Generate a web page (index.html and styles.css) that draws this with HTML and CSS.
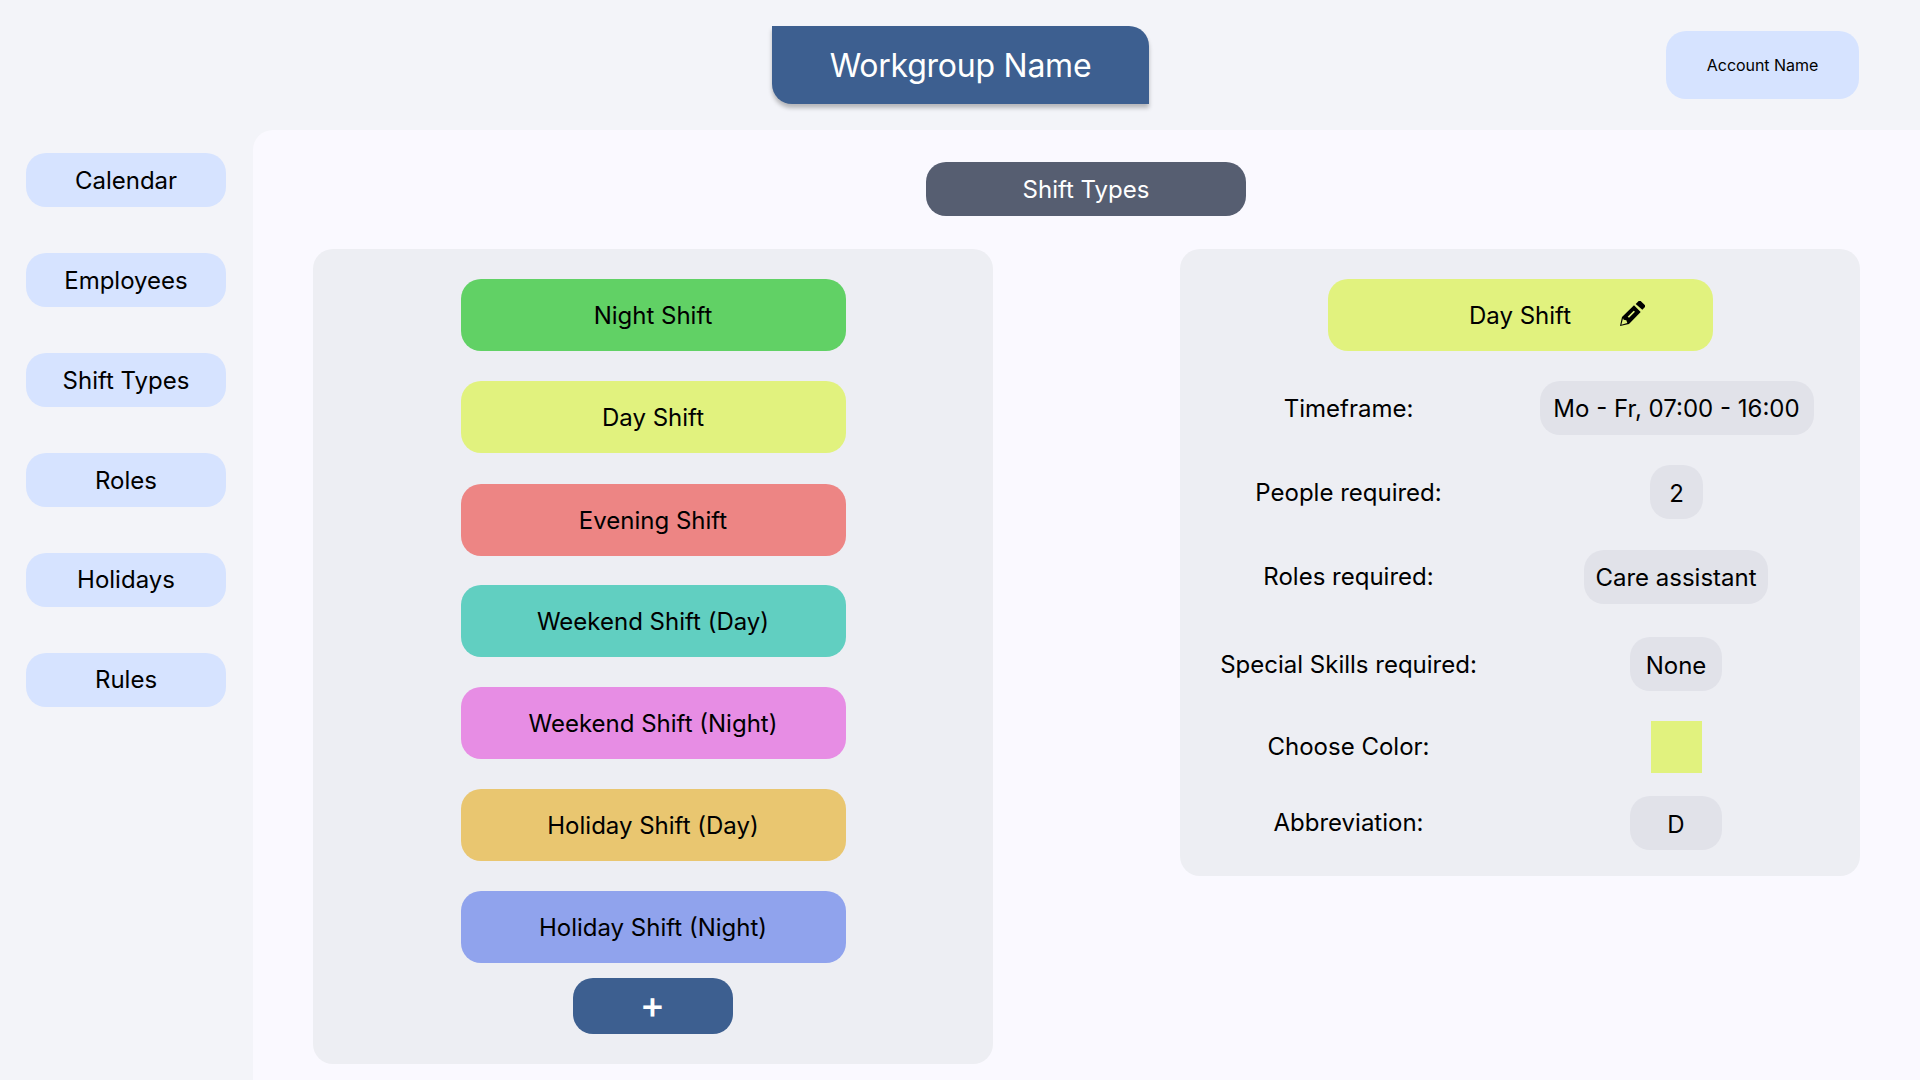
FILE: index.html
```html
<!DOCTYPE html>
<html lang="en">
<head>
<meta charset="utf-8">
<title>Workgroup Name – Shift Types</title>
<link rel="stylesheet" href="styles.css">
</head>
<body>
<div class="app">
  <header class="topbar">
    <h1 class="workgroup">Workgroup Name</h1>
    <a class="account">Account Name</a>
  </header>
  <nav class="sidebar">
    <a class="nav-item">Calendar</a>
    <a class="nav-item">Employees</a>
    <a class="nav-item">Shift Types</a>
    <a class="nav-item">Roles</a>
    <a class="nav-item nav-item-raised">Holidays</a>
    <a class="nav-item nav-item-raised">Rules</a>
  </nav>
  <main class="content">
    <h2 class="page-title">Shift Types</h2>
    <div class="panels">
      <section class="panel shift-list">
        <button class="shift night">Night Shift</button>
        <button class="shift day">Day Shift</button>
        <button class="shift evening">Evening Shift</button>
        <button class="shift weekend-day">Weekend Shift (Day)</button>
        <button class="shift weekend-night">Weekend Shift (Night)</button>
        <button class="shift holiday-day">Holiday Shift (Day)</button>
        <button class="shift holiday-night">Holiday Shift (Night)</button>
        <button class="add">+</button>
      </section>
      <section class="panel details">
        <div class="shift day details-title">
          <span>Day Shift</span>
          <svg class="pencil" viewBox="0 0 75 75" aria-hidden="true">
            <path d="M47 9 56 0H62L75 13V18L67 26Z"/>
            <path fill-rule="evenodd" d="M42 13 62 33 27 69 0 75 6 48ZM9 52 4 71 22 66 19 58 11 56ZM41 29 23 47 27 50 45 32Z"/>
          </svg>
        </div>
        <div class="row row-time"><span class="label">Timeframe:</span><span class="cell"><span class="value value-time">Mo - Fr, 07:00 - 16:00</span></span></div>
        <div class="row row-people"><span class="label">People required:</span><span class="cell"><span class="value value-count">2</span></span></div>
        <div class="row row-roles"><span class="label">Roles required:</span><span class="cell"><span class="value value-role">Care assistant</span></span></div>
        <div class="row row-skills"><span class="label">Special Skills required:</span><span class="cell"><span class="value">None</span></span></div>
        <div class="row row-color"><span class="label">Choose Color:</span><span class="cell"><span class="swatch"></span></span></div>
        <div class="row row-abbr"><span class="label">Abbreviation:</span><span class="cell"><span class="value">D</span></span></div>
      </section>
    </div>
  </main>
</div>
</body>
</html>
```
FILE: styles.css
```css
* { box-sizing: border-box; }
body {
  margin: 0;
  font-family: Inter, "Liberation Sans", sans-serif;
  font-size: 24px;
  line-height: 30px;
  color: #000;
  background: #f3f4f9;
}
h1, h2 { margin: 0; font-weight: 400; }
button { border: 0; padding: 0; font: inherit; color: inherit; }
.app {
  display: grid;
  grid-template: 130px 950px / 253px 1667px;
  width: 1920px;
  height: 1080px;
  overflow: hidden;
}
.topbar {
  grid-column: 1 / 3;
  display: flex;
  justify-content: space-between;
  align-items: flex-start;
  padding: 26px 61px 0 772px;
}
.workgroup {
  width: 377px;
  height: 78px;
  border-radius: 0 20px 0 20px;
  background: #3d5f90;
  color: #fff;
  font-size: 32px;
  letter-spacing: -0.25px;
  line-height: 80px;
  text-align: center;
  box-shadow: 0 4px 4px rgba(0, 0, 0, 0.25);
}
.account {
  width: 193px;
  height: 68px;
  margin-top: 5px;
  border-radius: 20px;
  background: #d6e3ff;
  font-size: 16px;
  letter-spacing: -0.05px;
  line-height: 69px;
  text-align: center;
}
.sidebar {
  display: flex;
  flex-direction: column;
  gap: 46px;
  padding: 23px 27px 0 26px;
}
.nav-item {
  height: 54px;
  border-radius: 20px;
  background: #d6e3ff;
  line-height: 56px;
  text-align: center;
}
.nav-item-raised { line-height: 54px; }
.content {
  display: flex;
  flex-direction: column;
  align-items: center;
  padding: 32px 60px 0;
  border-top-left-radius: 20px;
  background: #faf9ff;
}
.page-title {
  width: 320px;
  height: 54px;
  margin-right: 1px;
  border-radius: 20px;
  background: #565e71;
  color: #fff;
  font-size: 24px;
  line-height: 56px;
  text-align: center;
}
.panels {
  display: flex;
  justify-content: space-between;
  align-items: flex-start;
  width: 1547px;
  margin-top: 33px;
}
.panel {
  display: flex;
  flex-direction: column;
  align-items: center;
  width: 680px;
  padding-top: 30px;
  border-radius: 20px;
  background: #edeef3;
}
.shift-list { height: 815px; gap: 30px; }
.shift {
  width: 385px;
  height: 72px;
  border-radius: 20px;
  line-height: 72px;
  text-align: center;
}
button.shift { padding-top: 1px; }
.night { background: #61d165; }
.day { background: #e1f27e; }
.evening { background: #ed8584; margin-top: 1px; }
.weekend-day { background: #61cfc1; margin-top: -1px; }
.weekend-night { background: #e78de4; }
.holiday-day { background: #e9c670; }
.holiday-night { background: #90a3ed; }
.add {
  width: 160px;
  height: 56px;
  margin-top: -15px;
  padding: 0 1px 4px 0;
  border-radius: 20px;
  background: #3d5f90;
  color: #fff;
  font-size: 38px;
  font-weight: 500;
  line-height: 52px;
}
.details { height: 627px; }
.details-title {
  display: grid;
  grid-template: 72px / 292px 25px;
  align-items: start;
}
.details-title span { padding-left: 93px; line-height: 74px; }
.pencil { width: 25px; height: 25px; margin-top: 22px; fill: #000; }
.row {
  display: flex;
  width: 680px;
  height: 54px;
  line-height: 56px;
  text-align: center;
}
.label { width: 337px; }
.cell { width: 319px; display: flex; justify-content: center; }
.value {
  width: 92px;
  height: 54px;
  margin-right: 1px;
  border-radius: 20px;
  background: #e1e2e9;
  line-height: 58px;
}
.value-time { width: 274px; margin-right: 0; line-height: 56px; }
.value-count { width: 53px; margin-right: 0; }
.value-role { width: 184px; line-height: 56px; }
.swatch { width: 51px; height: 52px; background: #e1f27e; }
.row-time { margin-top: 30px; }
.row-people { margin-top: 30px; }
.row-roles { margin-top: 31px; }
.row-skills { margin-top: 33px; }
.row-color { margin-top: 30px; height: 52px; }
.row-abbr { margin-top: 23px; }
.row-roles .label, .row-abbr .label { line-height: 54px; }
.row-color .label { line-height: 52px; }
```
